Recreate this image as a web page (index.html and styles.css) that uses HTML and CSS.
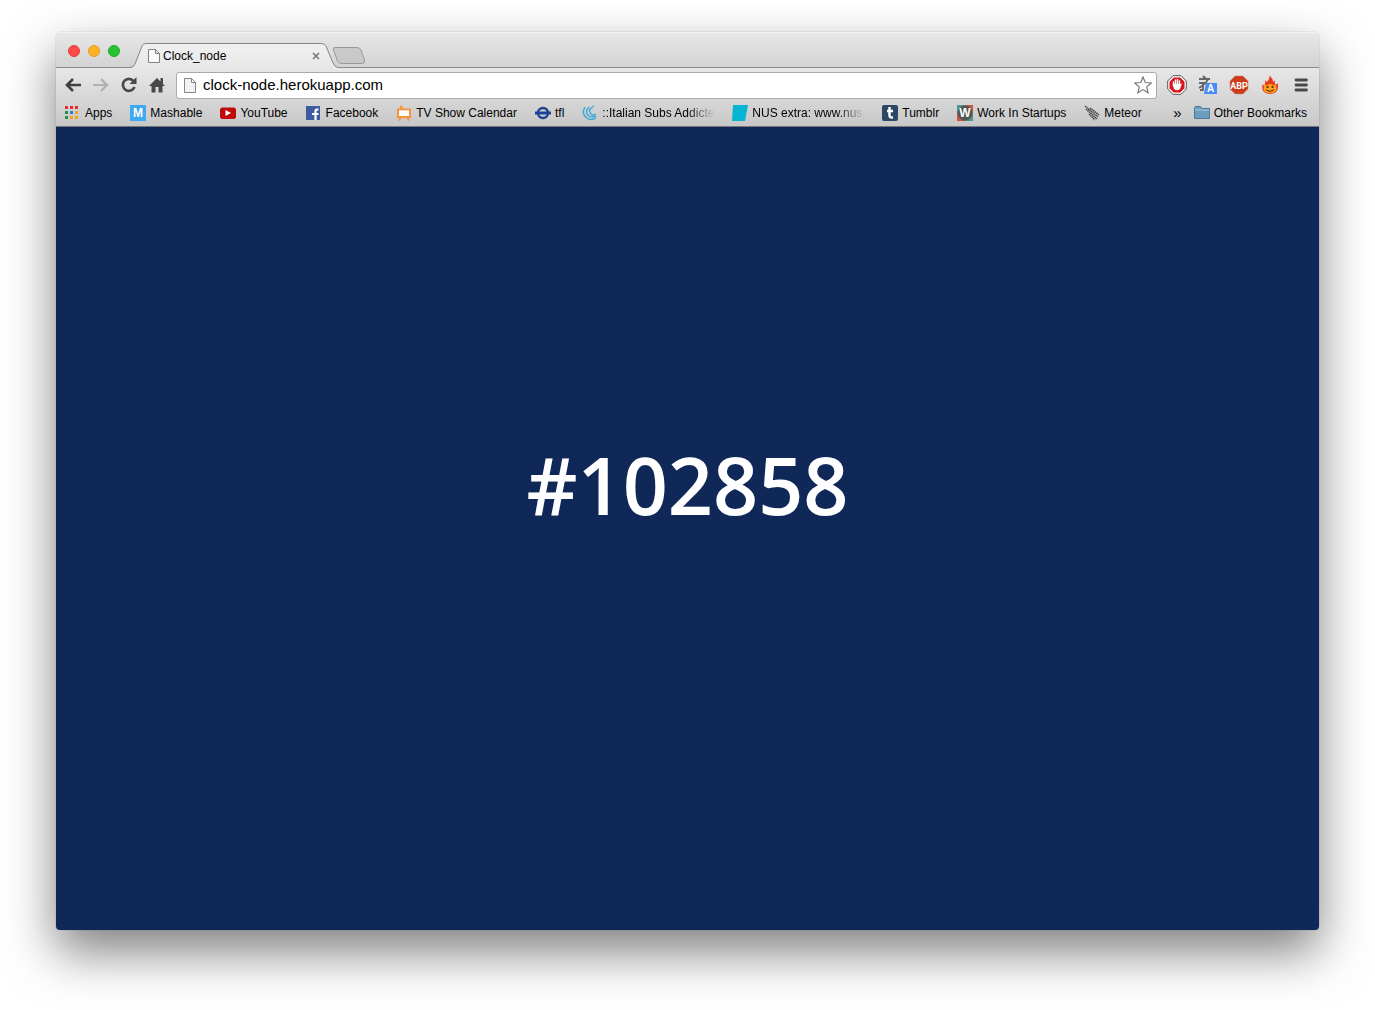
FILE: index.html
```html
<!DOCTYPE html>
<html lang="en">
<head>
<meta charset="utf-8">
<title>Clock_node</title>
<link rel="stylesheet" href="styles.css">
</head>
<body>
<div class="window">
  <header class="chrome">
    <div class="titlebar">
      <div class="lights">
        <button class="light close" aria-label="Close window"></button>
        <button class="light minimise" aria-label="Minimise window"></button>
        <button class="light zoom" aria-label="Zoom window"></button>
      </div>
      <div class="tab">
        <svg class="tab-shape" width="208" height="25" viewBox="0 0 208 25" aria-hidden="true">
          <defs><linearGradient id="tabfill" x2="0" y2="1"><stop stop-color="#f1f1f1"/><stop offset="1" stop-color="#e7e7e7"/></linearGradient></defs>
          <path d="M0 25Q4 24 5 21L12 3Q13 .5 16 .5H191Q195 .5 196 3L203 20Q205 24 208 25Z" fill="url(#tabfill)"/>
          <path d="M0 24.500Q4 24 5 21L12 3Q13 .5 16 .5H191Q195 .5 196 3L203 20Q205 24 208 24.500" fill="none" stroke="#858585"/>
        </svg>
        <svg class="page-icon" width="12" height="14" viewBox="0 0 12 14" aria-hidden="true"><path d="M.5 .5H7.500L11.500 4.500V13.500H.5ZM7.500 .5V4.500H11.500" fill="#fafafa" stroke="#808080"/></svg>
        <span class="tab-title">Clock_node</span>
        <button class="tab-close" aria-label="Close tab"><svg width="8" height="8" viewBox="0 0 8 8"><path d="M1 1L7 7M7 1L1 7" stroke="#777" stroke-width="1.600"/></svg></button>
      </div>
      <button class="new-tab" aria-label="New tab"><svg width="34" height="17" viewBox="0 0 34 17"><path d="M3 .5H25Q28 .5 29 3L32.500 13Q33 16.500 30 16.500H10Q7 16.500 5.500 14L1.500 3Q.5 .5 3 .5Z" fill="#c9c9c9" stroke="#999"/></svg></button>
    </div>
    <div class="toolbar">
      <nav class="nav">
        <button aria-label="Back"><svg width="16" height="14" viewBox="0 0 16 14"><path d="M8 1L2 7L8 13M2 7H16" fill="none" stroke="#414141" stroke-width="2.600"/></svg></button>
        <button aria-label="Forward"><svg width="16" height="14" viewBox="0 0 16 14"><path d="M8 1L14 7L8 13M14 7H0" fill="none" stroke="#b0b0b0" stroke-width="2.200"/></svg></button>
        <button aria-label="Reload"><svg width="16" height="16" viewBox="0 0 16 16"><path d="M12.500 4A6 6 0 1 0 13.500 10" fill="none" stroke="#484848" stroke-width="2.600"/><path d="M15.500 0V7H8.500Z" fill="#484848"/></svg></button>
        <button aria-label="Home"><svg width="16" height="16" viewBox="0 0 16 16"><path d="M8 1L0 9H2.500V15.500H6.500V10H9.500V15.500H13.500V9H16L14 7V1H11.500V4.500Z" fill="#484848"/></svg></button>
      </nav>
      <div class="address">
        <svg width="12" height="15" viewBox="0 0 12 15" aria-hidden="true"><path d="M.5 .5H7.500L11.500 4.500V14.500H.5ZM7.500 .5V4.500H11.500" fill="#f3f3f3" stroke="#858585"/></svg>
        <input class="url" type="text" aria-label="Address" value="clock-node.herokuapp.com">
        <button aria-label="Bookmark this page"><svg width="18" height="18" viewBox="0 0 18 18"><path d="M9 1L11.300 6.500L17.300 7L12.700 10.900L14.100 16.800L9 13.600L3.900 16.800L5.300 10.900L.7 7L6.700 6.500Z" fill="#fff" stroke="#777" stroke-width="1.200"/></svg></button>
      </div>
      <div class="extensions">
        <button aria-label="Block ads"><svg width="20" height="20" viewBox="0 0 20 20"><path d="M6 .7H14L19.300 6V14L14 19.300H6L.7 14V6Z" fill="#fff" stroke="#555"/><path d="M6.700 2.500H13.300L17.500 6.700V13.300L13.300 17.500H6.700L2.500 13.300V6.700Z" fill="#d9141c"/><path d="M6.500 11V7M8.500 10V5M10.500 10V4.500M12.500 10V6" stroke="#fff" stroke-width="1.500" stroke-linecap="round"/><path d="M5.700 9H13.200L15 8.500L13 14Q10 16.500 7 14Z" fill="#fff"/></svg></button>
        <button aria-label="Translate"><svg width="20" height="20" viewBox="0 0 20 20"><path d="M1 4H12M5 1L8 4M10 4Q8 9 1 13M1 8H9M5 8V15H2" fill="none" stroke="#666" stroke-width="1.800"/><path d="M8 8H19V19H6Z" fill="#4a8cf5"/><text x="9" y="17" class="glyph translate-a">A</text></svg></button>
        <button aria-label="Adblock Plus"><svg width="20" height="20" viewBox="0 0 20 20"><path d="M6 .7H14L19.300 6V14L14 19.300H6L.7 14V6Z" fill="#cc3b1b" stroke="#ddd" stroke-width=".6"/><text x="10" y="13.500" class="glyph abp">ABP</text></svg></button>
        <button aria-label="Flame"><svg width="20" height="20" viewBox="0 0 20 20"><path d="M4 17Q1 13 3 9L4 11Q6 8 5 5L7 7Q10 4 9.500 .5Q13 3 13 7L15 5Q14 8 16 10L17.500 8Q19 14 16 17Q10 21 4 17Z" fill="#e8391c"/><path d="M4.500 16.500Q2.500 12 5 9.500L7 10.500Q10 7 13 10.500L15 9.500Q18 13 15.500 16.500Q10 20 4.500 16.500Z" fill="#ffa018"/><circle cx="7.500" cy="12" r="1.100" fill="#452716"/><circle cx="12.500" cy="12" r="1.100" fill="#452716"/><path d="M6 14.500Q10 18 14 14.500" fill="none" stroke="#452716"/></svg></button>
        <button aria-label="Menu"><svg width="20" height="20" viewBox="0 0 20 20"><path d="M5 5H15.500M5 10H15.500M5 15H15.500" stroke="#484848" stroke-width="2.800" stroke-linecap="round"/></svg></button>
      </div>
    </div>
    <nav class="bookmarks" aria-label="Bookmarks">
      <a href="#apps"><svg width="16" height="16" viewBox="0 0 16 16"><path d="M0 1H3V4H0ZM5 1H8V4H5ZM10 1H13V4H10Z" fill="#ee2b35"/><path d="M0 6H3V9H0ZM0 11H3V14H0Z" fill="#209347"/><path d="M5 6H8V9H5Z" fill="#2d79e6"/><path d="M10 6H13V9H10ZM5 11H8V14H5ZM10 11H13V14H10Z" fill="#f7a21b"/></svg><span>Apps</span></a>
      <a href="#mashable"><svg width="16" height="16" viewBox="0 0 16 16"><path d="M0 0H16V16H0Z" fill="#3fa9f1"/><text x="8" y="12" class="glyph mash">M</text></svg><span>Mashable</span></a>
      <a href="#youtube"><svg width="16" height="16" viewBox="0 0 16 16"><rect y="2.500" width="16" height="11.500" rx="2.500" fill="#bd0c0c"/><path d="M5.500 5L11 8L5.500 11Z" fill="#fff"/></svg><span>YouTube</span></a>
      <a href="#facebook"><svg width="16" height="16" viewBox="0 0 16 16"><path d="M0 1H14V15H0Z" fill="#3f5b9f"/><path d="M12.500 4.500H11Q9.500 4.500 9.500 6V15M6 9H12.500" fill="none" stroke="#fff" stroke-width="2.200"/></svg><span>Facebook</span></a>
      <a href="#tv"><svg width="16" height="16" viewBox="0 0 16 16"><path d="M4 1L7 4M2 4.500H14V12H2ZM5 12L3 15.500M11 12L13 15.500" fill="none" stroke="#f7943a" stroke-width="2"/><path d="M3 5.500H13V11H3Z" fill="#fff"/></svg><span>TV Show Calendar</span></a>
      <a href="#tfl"><svg width="16" height="16" viewBox="0 0 16 16"><circle cx="8" cy="8" r="5" fill="none" stroke="#1c4294" stroke-width="2.400"/><path d="M0 6.500H16V9.500H0Z" fill="#1c4294"/></svg><span>tfl</span></a>
      <a href="#subs"><svg width="16" height="16" viewBox="0 0 16 16"><path d="M3 2Q-1 9 5 13Q9 16 14 13M7 2Q2 8 7 11Q10 13 14 11M12 1Q5 5 9 9Q11 11 14 9" fill="none" stroke="#35a8d6" stroke-width="1.400"/></svg><span class="fade">::Italian Subs Addicted</span></a>
      <a href="#nus"><svg width="16" height="16" viewBox="0 0 16 16"><path d="M1 0H16L13 16H0Z" fill="#05b5d2"/></svg><span class="fade">NUS extra: www.nus.org</span></a>
      <a href="#tumblr"><svg width="16" height="16" viewBox="0 0 16 16"><rect width="16" height="16" rx="2" fill="#2d4663"/><path d="M7.500 2V10.500Q7.500 13 11 12.500M5 6H11" fill="none" stroke="#fff" stroke-width="2.500"/></svg><span>Tumblr</span></a>
      <a href="#startups"><svg width="16" height="16" viewBox="0 0 16 16"><path d="M0 0H16V16H0Z" fill="#c9573d"/><path d="M0 0H8V8H0ZM8 8H16V16H8Z" fill="#4b968e"/><circle cx="8" cy="8" r="7.500" fill="#555"/><text x="8" y="12" class="glyph work">W</text></svg><span>Work In Startups</span></a>
      <a href="#meteor"><svg width="16" height="16" viewBox="0 0 16 16"><path d="M1 1L14 12M6 3L15 10M2 4L13 14M5 9L11 15" stroke="#444" stroke-width="1.500" stroke-dasharray="1.500 .5"/></svg><span>Meteor</span></a>
      <div class="overflow">
        <button class="more" aria-label="More bookmarks">»</button>
        <a href="#other"><svg width="16" height="16" viewBox="0 0 16 16"><path d="M.5 13.500V3L1.500 1.500H6.500L8 3.500H15.500V13.500Z" fill="#6c9dbe" stroke="#4d7896"/><path d="M1 5H15" stroke="#a9cce3"/></svg><span>Other Bookmarks</span></a>
      </div>
    </nav>
  </header>
  <main class="page"><h1>#102858</h1></main>
</div>
</body>
</html>
```
FILE: styles.css
```css
* { box-sizing: border-box; }
body {
  margin: 0;
  min-height: 100vh;
  padding: 32px 56px 80px;
  display: flex;
  background: #fff;
  font: 12px/16px "Liberation Sans", Arial, sans-serif;
  color: #000;
}
svg { display: block; flex: none; }
button { padding: 0; border: 0; background: none; color: inherit; font: inherit; }
.window {
  flex: 1;
  min-width: 0;
  display: flex;
  flex-direction: column;
  border-radius: 5px 5px 4px 4px;
  box-shadow: 0 0 1px rgba(0, 0, 0, .5), 0 22px 50px rgba(0, 0, 0, .5);
}
.chrome {
  border-radius: 5px 5px 0 0;
  border-bottom: 1px solid #777;
  background: linear-gradient(#e8e8e8, #d2d2d2 36px, #e7e7e7 36px, #c8c8c8);
}
.titlebar {
  height: 36px;
  padding-left: 12px;
  display: flex;
  align-items: flex-end;
  border-bottom: 1px solid #8c8c8c;
  border-top: 1px solid #f4f4f4;
  border-radius: 5px 5px 0 0;
}
.lights { display: flex; gap: 8px; padding-bottom: 10px; }
.light { width: 12px; height: 12px; border-radius: 50%; border: 1px solid; }
.close { background: #fc4a48; border-color: #e33e3b; }
.minimise { background: #fdb125; border-color: #dfa023; }
.zoom { background: #29c231; border-color: #1dac27; }
.tab {
  position: relative;
  width: 208px;
  height: 25px;
  margin: 0 -6px -1px 10px;
  padding: 0 18px;
  display: flex;
  align-items: center;
}
.tab-shape { position: absolute; left: 0; top: 0; }
.page-icon { position: relative; }
.tab-title { position: relative; flex: 1; padding-left: 3px; }
.tab-close { position: relative; }
.new-tab { padding-bottom: 3px; }
.toolbar {
  height: 34px;
  padding: 3px 8px 3px 9px;
  display: flex;
  align-items: center;
}
.nav { display: flex; align-items: center; gap: 12px; padding-right: 11px; }
.address {
  flex: 1;
  height: 27px;
  padding: 0 4px 0 7px;
  display: flex;
  align-items: center;
  gap: 7px;
  background: #fff;
  border: 1px solid #aaa;
  border-radius: 3px;
}
.url {
  flex: 1;
  min-width: 0;
  padding: 0;
  border: 0;
  outline: 0;
  background: none;
  color: #000;
  font: 15px/20px "Liberation Sans", Arial, sans-serif;
}
.extensions { display: flex; gap: 11px; padding-left: 10px; }
.bookmarks {
  height: 24px;
  padding: 0 11px 2px 9px;
  display: flex;
  align-items: center;
  gap: 17px;
  white-space: nowrap;
}
.bookmarks a { display: flex; align-items: center; gap: 4px; color: inherit; text-decoration: none; }
.bookmarks a span { padding-right: 1px; }
.fade {
  width: 113px;
  overflow: hidden;
  -webkit-mask-image: linear-gradient(to right, #000 75%, transparent);
  mask-image: linear-gradient(to right, #000 75%, transparent);
}
.overflow { display: flex; align-items: center; gap: 12px; margin-left: auto; }
.more { font-size: 15px; }
.glyph { fill: #fff; font-family: "Liberation Sans", Arial, sans-serif; font-weight: bold; }
.translate-a { font-size: 10px; }
.abp { font-family: Roboto, sans-serif; font-size: 9px; text-anchor: middle; }
.mash { font-size: 12px; text-anchor: middle; }
.work { font-size: 12px; text-anchor: middle; }
.page {
  flex: 1;
  display: grid;
  place-items: center;
  padding-bottom: 88px;
  background: #102858;
  border-radius: 0 0 4px 4px;
}
h1 { margin: 0; color: #fff; font: 600 79px/88px "Open Sans", "Noto Sans", sans-serif; }
```
